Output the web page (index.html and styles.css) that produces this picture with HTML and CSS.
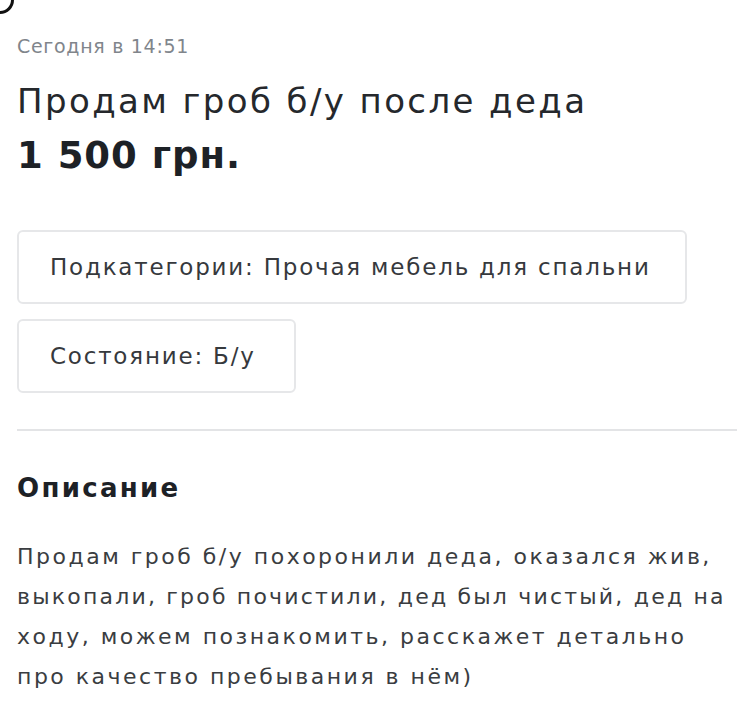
FILE: index.html
```html
<!DOCTYPE html>
<html lang="ru">
<head>
<meta charset="utf-8">
<link rel="stylesheet" href="styles.css">
</head>
<body>
<div class="corner"></div>
<main class="page">
  <div class="date">Сегодня в 14:51</div>
  <h1 class="title">Продам гроб б/у после деда</h1>
  <div class="price">1 500 грн.</div>
  <div class="tags">
    <div class="tag tag-wide">Подкатегории: Прочая мебель для спальни</div>
    <div class="tag tag-narrow">Состояние: Б/у</div>
  </div>
  <hr class="divider">
  <h2 class="section">Описание</h2>
  <p class="desc">Продам гроб б/у похоронили деда, оказался жив,<br><span class="tight">выкопали, гроб почистили, дед был чистый, дед на</span><br>ходу, можем познакомить, расскажет детально<br>про качество пребывания в нём)</p>
</main>
</body>
</html>
```
FILE: styles.css
```css
html, body {
  margin: 0;
  padding: 0;
  background: #fff;
}
body {
  font-family: "DejaVu Sans", sans-serif;
  color: #2a2d31;
  width: 750px;
  height: 715px;
  overflow: hidden;
  position: relative;
}
.corner {
  position: absolute;
  left: -14px;
  top: -14px;
  width: 22px;
  height: 22px;
  border-radius: 50%;
  border: 3px solid #111;
}
.page {
  padding: 34px 13px 0 17px;
}
.date {
  font-size: 19px;
  color: #80858b;
  line-height: 24px;
  letter-spacing: 0.7px;
}
.title {
  margin: 23px 0 0;
  font-size: 34px;
  font-weight: 400;
  line-height: 40px;
  letter-spacing: 2.4px;
  color: #25282c;
}
.price {
  margin-top: 13px;
  font-size: 37px;
  font-weight: 700;
  line-height: 44px;
  letter-spacing: 1px;
  color: #1d2126;
}
.tags {
  margin-top: 52px;
  display: flex;
  flex-direction: column;
  align-items: flex-start;
  gap: 15px;
}
.tag {
  border: 2px solid #e6e7e9;
  border-radius: 6px;
  padding: 22px 31px;
  font-size: 23px;
  line-height: 26px;
  letter-spacing: 1.8px;
  color: #36393d;
  white-space: nowrap;
  box-sizing: border-box;
}
.tag-wide {
  width: 670px;
}
.tag-narrow {
  width: 279px;
}
.divider {
  margin: 36px 0 0;
  border: 0;
  height: 2px;
  background: #e3e4e6;
  width: 720px;
}
.section {
  margin: 42px 0 0;
  font-size: 26px;
  font-weight: 700;
  line-height: 30px;
  letter-spacing: 2.3px;
  color: #1d2126;
}
.desc {
  margin: 34px 0 0;
  font-size: 22px;
  line-height: 40px;
  letter-spacing: 2.5px;
  color: #3a3d41;
  white-space: nowrap;
}
.tight {
  letter-spacing: 2.2px;
}
```
